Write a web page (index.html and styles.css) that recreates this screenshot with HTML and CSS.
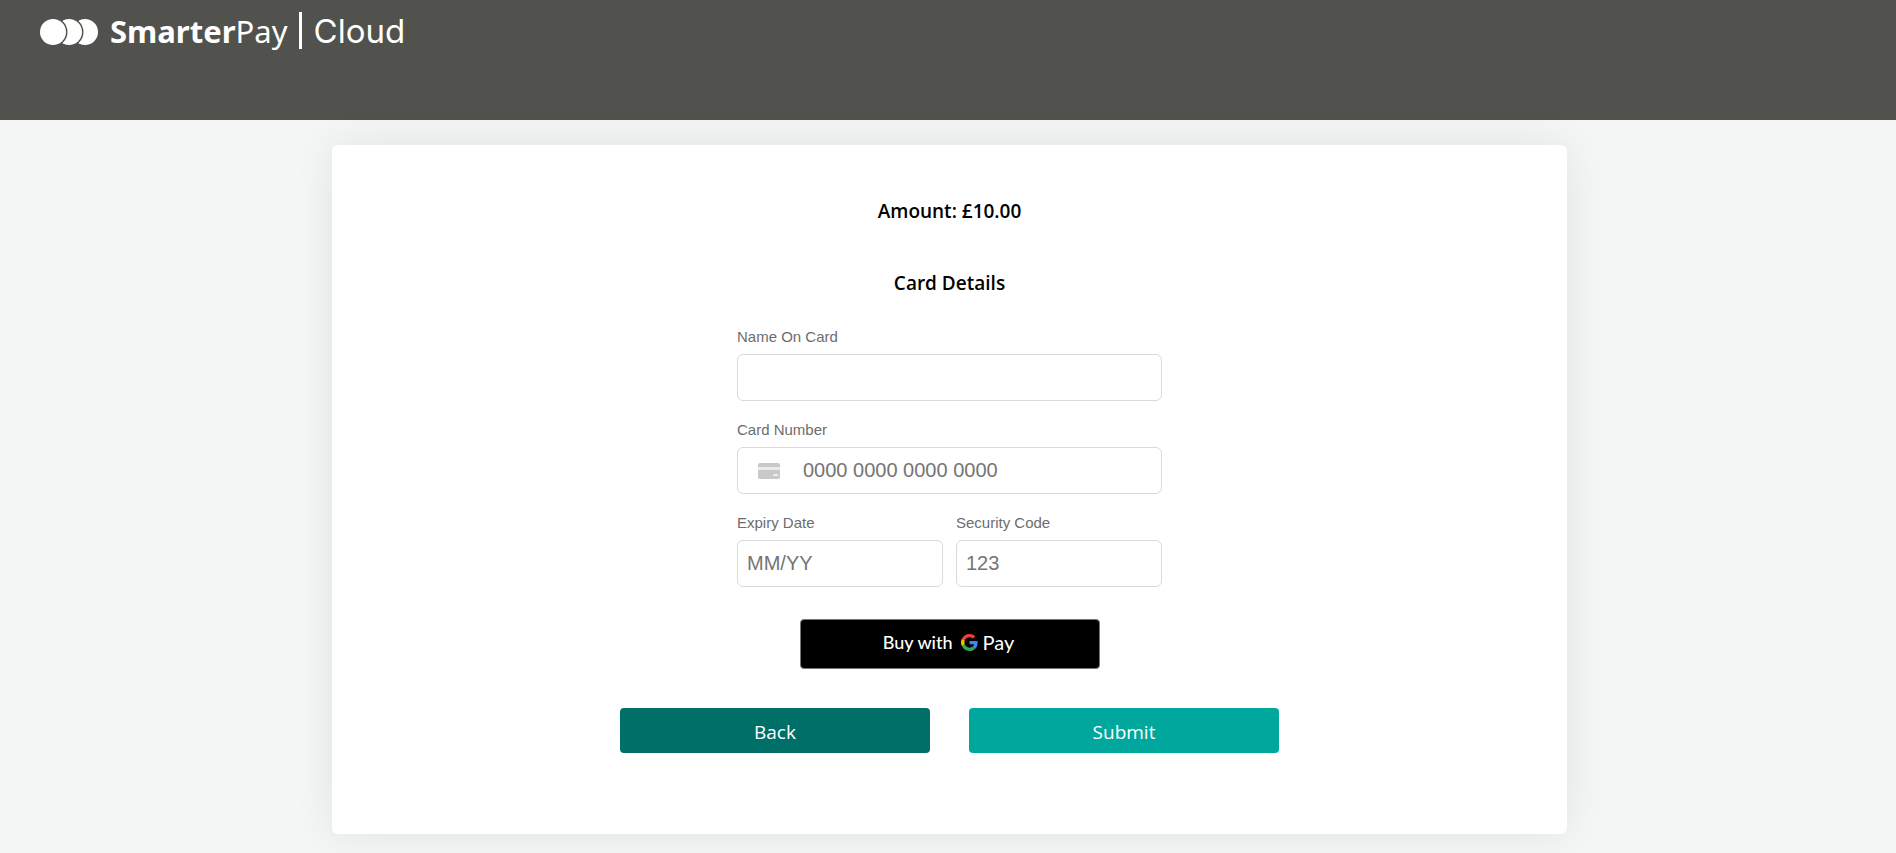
FILE: index.html
```html
<!DOCTYPE html>
<html lang="en">
<head>
<meta charset="utf-8">
<meta name="viewport" content="width=device-width, initial-scale=1">
<title>SmarterPay Cloud</title>
<link rel="stylesheet" href="styles.css">
</head>
<body>
<header class="site-header">
  <div class="brand">
    <svg class="brand-mark" viewBox="0 0 58 26" aria-hidden="true">
      <circle cx="45" cy="13" r="13" fill="#fff"/>
      <circle cx="29" cy="13" r="14.500" fill="#51514e"/>
      <circle cx="29" cy="13" r="13" fill="#fff"/>
      <circle cx="13" cy="13" r="14.500" fill="#51514e"/>
      <circle cx="13" cy="13" r="13" fill="#fff"/>
    </svg>
    <span class="brand-name"><b class="brand-strong">Smarter</b>Pay</span>
    <span class="brand-divider"></span>
    <span class="brand-product">Cloud</span>
  </div>
</header>
<main class="page">
  <form class="card">
    <h1 class="title">Amount: £10.00</h1>
    <h2 class="title">Card Details</h2>
    <div class="fields">
      <div class="field">
        <label class="label" for="name">Name On Card</label>
        <input class="input" id="name" type="text">
      </div>
      <div class="field">
        <label class="label" for="number">Card Number</label>
        <div class="input-wrap">
          <svg class="card-icon" viewBox="0 0 22 16" aria-hidden="true">
            <rect width="22" height="16" rx="2" fill="#c9c9c9"/>
            <rect y="4" width="22" height="3" fill="#ebebeb"/>
            <rect x="15" y="11" width="5" height="2" fill="#ebebeb"/>
          </svg>
          <input class="input input-number" id="number" type="text" placeholder="0000 0000 0000 0000">
        </div>
      </div>
      <div class="field">
        <label class="label" for="expiry">Expiry Date</label>
        <input class="input" id="expiry" type="text" placeholder="MM/YY">
      </div>
      <div class="field">
        <label class="label" for="code">Security Code</label>
        <input class="input" id="code" type="text" placeholder="123">
      </div>
    </div>
    <button class="gpay" type="button">
      <span class="gpay-buy">Buy with</span>
      <svg class="gpay-logo" viewBox="0 0 48 48" aria-label="Google">
        <path fill="#ea4335" d="M24 9.500c3.540 0 6.710 1.220 9.210 3.600l6.850-6.850C35.900 2.380 30.470 0 24 0 14.620 0 6.510 5.380 2.560 13.220l7.980 6.190C12.430 13.720 17.740 9.500 24 9.500z"/>
        <path fill="#4285f4" d="M46.980 24.550c0-1.570-.15-3.090-.38-4.550H24v9.020h12.940c-.58 2.960-2.260 5.480-4.780 7.180l7.730 6c4.510-4.180 7.090-10.360 7.090-17.650z"/>
        <path fill="#fbbc05" d="M10.530 28.590A14.500 14.500 0 0 1 9.770 24c0-1.600.27-3.140.76-4.590l-7.980-6.190A23.900 23.900 0 0 0 0 24c0 3.880.92 7.540 2.560 10.780z"/>
        <path fill="#34a853" d="M24 48c6.480 0 11.930-2.130 15.890-5.810l-7.730-6c-2.150 1.450-4.920 2.300-8.160 2.300-6.260 0-11.570-4.220-13.470-9.910l-7.980 6.190C6.510 42.620 14.620 48 24 48z"/>
      </svg>
      <span class="gpay-pay">Pay</span>
    </button>
    <div class="actions">
      <button class="btn btn-back" type="button">Back</button>
      <button class="btn btn-submit" type="submit">Submit</button>
    </div>
  </form>
</main>
</body>
</html>
```
FILE: styles.css
```css
* {
  box-sizing: border-box;
}

body {
  margin: 0;
  min-height: 100vh;
  background: #f3f6f5;
  font-family: "Open Sans", sans-serif;
  color: #000;
}

.site-header {
  height: 120px;
  padding: 12px 40px;
  background: #51514e;
  color: #fff;
}

.brand {
  display: flex;
  align-items: center;
  height: 40px;
}

.brand-mark {
  width: 58px;
  height: 26px;
  margin-right: 12px;
}

.brand-name {
  padding-bottom: 2px;
  font: 400 31px/38px "Noto Sans", sans-serif;
}

.brand-strong {
  font-weight: 700;
}

.brand-divider {
  width: 3px;
  height: 37px;
  margin: 0 12px 3px 11px;
  background: #fff;
}

.brand-product {
  padding-bottom: 2px;
  font: 400 33px/38px Inter, sans-serif;
}

.page {
  padding: 25px 16px 19px 19px;
}

.card {
  display: flex;
  flex-direction: column;
  align-items: center;
  max-width: 1235px;
  margin: 0 auto;
  padding: 54px 24px 81px;
  border-radius: 6px;
  background: #fff;
  box-shadow: 0 0 40px rgba(0, 20, 10, 0.08);
}

.title {
  margin: 0 0 48px;
  font-size: 19px;
  font-weight: 600;
  line-height: 24px;
}

.fields {
  display: grid;
  grid-template-columns: 1fr 1fr;
  gap: 20px 13px;
  width: 100%;
  max-width: 425px;
  margin-top: -15px;
}

.field {
  display: flex;
  flex-direction: column;
  gap: 8px;
}

.field:nth-child(-n+2) {
  grid-column: span 2;
}

.label {
  font: 15px/18px "Liberation Sans", Arial, sans-serif;
  color: #6d6d6d;
}

.input {
  width: 100%;
  height: 47px;
  padding: 0 9px;
  border: 1px solid #d9dadb;
  border-radius: 6px;
  background: #fff;
  font: 20px "Liberation Sans", Arial, sans-serif;
}

.input::placeholder {
  color: #757575;
}

.input-wrap {
  position: relative;
}

.input-number {
  padding-left: 65px;
}

.card-icon {
  position: absolute;
  top: 16px;
  left: 21px;
  width: 22px;
  height: 16px;
}

.gpay {
  display: flex;
  align-items: center;
  justify-content: center;
  width: 300px;
  height: 50px;
  margin-top: 32px;
  padding: 0 2px 4px 0;
  border: 1px solid #747775;
  border-radius: 4px;
  background: #000;
  color: #fff;
}

.gpay-buy {
  font: 500 18px/24px Lato, sans-serif;
}

.gpay-logo {
  width: 17px;
  height: 17px;
  margin: 0 5px 0 8px;
}

.gpay-pay {
  font: 400 20px/24px Lato, sans-serif;
}

.actions {
  display: grid;
  grid-template-columns: 1fr 1fr;
  gap: 39px;
  width: 100%;
  max-width: 659px;
  margin-top: 39px;
}

.btn {
  height: 45px;
  padding: 2px 0 0;
  border: 0;
  border-radius: 4px;
  color: #fff;
  font: 400 19px/24px "Open Sans", sans-serif;
}

.btn-back {
  background: #006f68;
}

.btn-submit {
  background: #00a79d;
}
```
